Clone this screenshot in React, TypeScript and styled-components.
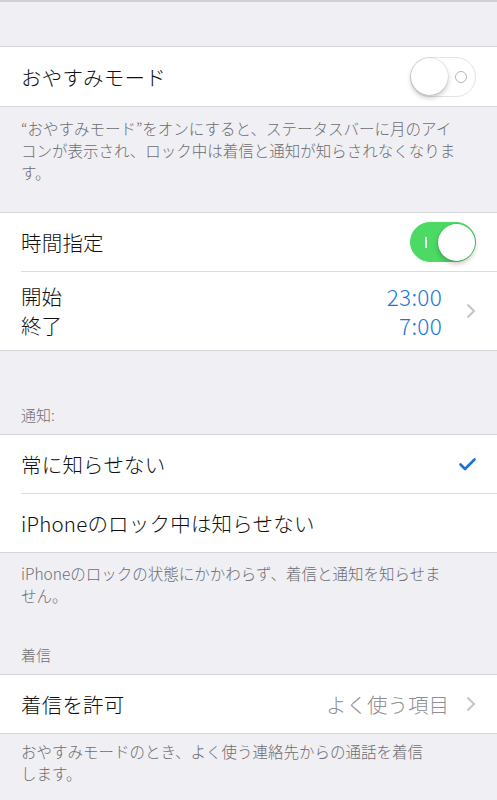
import React from "react";
import styled, { createGlobalStyle } from "styled-components";

const GlobalStyle = createGlobalStyle`
    body {
        margin: 0;
        background: #efeff4;
        font-family: "Noto Sans CJK JP", "Noto Sans", sans-serif;
        font-weight: 300;
        -webkit-font-smoothing: antialiased;
    }
`

const Page = styled.div`
    width: 497px;
    min-height: 800px;
    background: #efeff4;
    display: flex;
    flex-direction: column;
`

const TopLine = styled.div`
    height: 2px;
    background: #d1d0d7;
`

const Group = styled.section<{ $mt: number }>`
    margin-top: ${p => p.$mt}px;
    background: #fff;
    border-top: 1px solid #d6d5db;
    border-bottom: 1px solid #d6d5db;
    display: flex;
    flex-direction: column;
`

const Row = styled.div<{ $h?: number }>`
    height: ${p => p.$h ?? 58}px;
    padding: 0 21px;
    display: flex;
    align-items: center;
    justify-content: space-between;
`

const Divider = styled.div`
    height: 1px;
    margin-left: 21px;
    background: #dcdbe0;
`

const Title = styled.span`
    font-size: 20.5px;
    color: #111;
    letter-spacing: 0.2px;
`

const TwoLines = styled.div<{ $align?: string }>`
    display: flex;
    flex-direction: column;
    align-items: ${p => p.$align ?? "flex-start"};
    font-size: 20.5px;
    line-height: 29px;
    color: #111;
`

const Times = styled(TwoLines)`
    color: #1a78d6;
    font-size: 22.5px;
    letter-spacing: 0.3px;
    margin-right: 7px;
`

const Right = styled.div`
    display: flex;
    align-items: center;
    gap: 17px;
`

const Value = styled.span`
    font-size: 20.5px;
    color: #8e8e93;
`

const Footer = styled.p<{ $pt: number }>`
    margin: 0;
    padding: ${p => p.$pt}px 18px 0 21px;
    font-size: 15.5px;
    line-height: 22px;
    color: #6d6d72;
`

const Header = styled.div<{ $pt: number }>`
    padding: ${p => p.$pt}px 21px 8px;
    font-size: 15px;
    line-height: 22px;
    color: #6d6d72;
`

const Track = styled.div<{ $on: boolean }>`
    position: relative;
    width: 66px;
    height: 40px;
    box-sizing: border-box;
    border-radius: 20px;
    background: ${p => (p.$on ? "#4cd964" : "#fff")};
    border: 1.5px solid ${p => (p.$on ? "#4cd964" : "#e3e3e8")};
    display: flex;
    align-items: center;
    justify-content: ${p => (p.$on ? "flex-end" : "flex-start")};
`

const Knob = styled.div`
    width: 37px;
    height: 37px;
    border-radius: 50%;
    background: #fff;
    box-shadow: 0 3px 5px rgba(0, 0, 0, 0.22), 0 0 0 0.5px rgba(0, 0, 0, 0.12);
`

const OffMark = styled.span`
    position: absolute;
    right: 8px;
    top: 50%;
    width: 10px;
    height: 10px;
    margin-top: -6px;
    border-radius: 50%;
    border: 1.5px solid #b6b6bb;
`

const OnMark = styled.span`
    position: absolute;
    left: 14px;
    top: 50%;
    width: 1.5px;
    height: 11px;
    margin-top: -5.5px;
    background: #e8fbe9;
`

const Switch = ({ on }: { on: boolean }) => (
    <Track $on={on}>
        {on ? <OnMark /> : <OffMark />}
        <Knob />
    </Track>
)

const Chevron = () => (
    <svg width="10" height="16" viewBox="0 0 10 16">
        <path d="M1.5 1.5 L8 8 L1.5 14.5" fill="none" stroke="#c4c4c9" strokeWidth="2" />
    </svg>
)

const Check = () => (
    <svg width="17" height="13" viewBox="0 0 17 13">
        <path d="M1.5 6.5 L6 11 L15.5 1.5" fill="none" stroke="#1a72d4" strokeWidth="2.6" strokeLinecap="round" strokeLinejoin="round" />
    </svg>
)

export default function App() {
    return (
        <Page>
            <GlobalStyle />
            <TopLine />

            <Group $mt={44}>
                <Row $h={59}>
                    <Title>おやすみモード</Title>
                    <Switch on={false} />
                </Row>
            </Group>
            <Footer $pt={10}>
                “おやすみモード”をオンにすると、ステータスバーに月のアイ<br />
                コンが表示され、ロック中は着信と通知が知らされなくなりま<br />
                す。
            </Footer>

            <Group $mt={29}>
                <Row>
                    <Title>時間指定</Title>
                    <Switch on={true} />
                </Row>
                <Divider />
                <Row $h={78}>
                    <TwoLines>
                        <span>開始</span>
                        <span>終了</span>
                    </TwoLines>
                    <Right>
                        <Times $align="flex-end">
                            <span>23:00</span>
                            <span>7:00</span>
                        </Times>
                        <Chevron />
                    </Right>
                </Row>
            </Group>

            <Header $pt={53}>通知:</Header>
            <Group $mt={0}>
                <Row>
                    <Title>常に知らせない</Title>
                    <Check />
                </Row>
                <Divider />
                <Row>
                    <Title>iPhoneのロック中は知らせない</Title>
                </Row>
            </Group>
            <Footer $pt={9}>
                iPhoneのロックの状態にかかわらず、着信と通知を知らせま<br />
                せん。
            </Footer>

            <Header $pt={38}>着信</Header>
            <Group $mt={0}>
                <Row>
                    <Title>着信を許可</Title>
                    <Right>
                        <Value>よく使う項目</Value>
                        <Chevron />
                    </Right>
                </Row>
            </Group>
            <Footer $pt={6}>
                おやすみモードのとき、よく使う連絡先からの通話を着信<br />
                します。
            </Footer>
        </Page>
    )
}
